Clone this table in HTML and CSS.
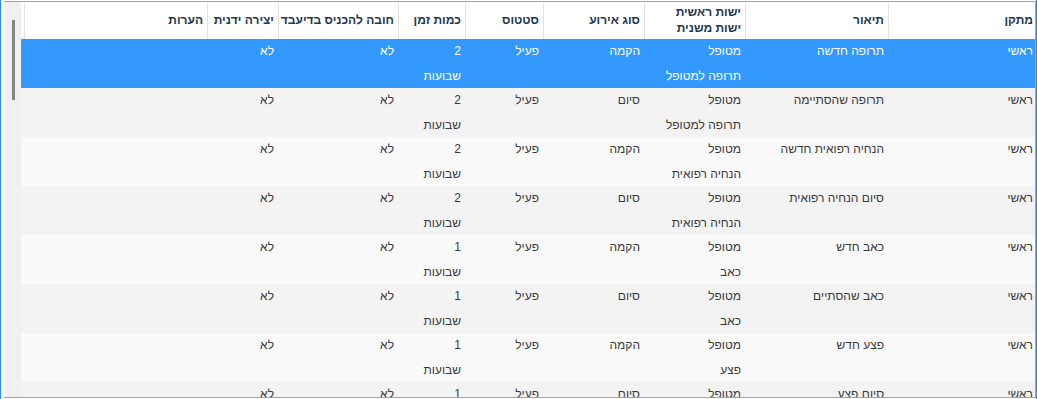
FILE: index.html
```html
<!DOCTYPE html>
<html lang="he">
<head>
<meta charset="utf-8">
<link rel="stylesheet" href="styles.css">
</head>
<body>
<div class="window">
  <div class="box">
    <div class="vscroll"><div class="thumb"></div></div>
    <div class="grid">
      <div class="row head">
        <div class="c c1">מתקן</div>
        <div class="c c2">תיאור</div>
        <div class="c c3 two"><span>ישות ראשית</span><span>ישות משנית</span></div>
        <div class="c c4">סוג אירוע</div>
        <div class="c c5">סטטוס</div>
        <div class="c c6">כמות זמן</div>
        <div class="c c7">חובה להכניס בדיעבד</div>
        <div class="c c8">יצירה ידנית</div>
        <div class="c c9">הערות</div>
        <div class="c c10"></div>
      </div>

      <div class="row sel">
        <div class="c c1">ראשי</div>
        <div class="c c2">תרופה חדשה</div>
        <div class="c c3"><span>מטופל</span><span>תרופה למטופל</span></div>
        <div class="c c4">הקמה</div>
        <div class="c c5">פעיל</div>
        <div class="c c6"><span>2</span><span>שבועות</span></div>
        <div class="c c7">לא</div>
        <div class="c c8">לא</div>
        <div class="c c9"></div>
        <div class="c c10"></div>
      </div>

      <div class="row odd">
        <div class="c c1">ראשי</div>
        <div class="c c2">תרופה שהסתיימה</div>
        <div class="c c3"><span>מטופל</span><span>תרופה למטופל</span></div>
        <div class="c c4">סיום</div>
        <div class="c c5">פעיל</div>
        <div class="c c6"><span>2</span><span>שבועות</span></div>
        <div class="c c7">לא</div>
        <div class="c c8">לא</div>
        <div class="c c9"></div>
        <div class="c c10"></div>
      </div>

      <div class="row even">
        <div class="c c1">ראשי</div>
        <div class="c c2">הנחיה רפואית חדשה</div>
        <div class="c c3"><span>מטופל</span><span>הנחיה רפואית</span></div>
        <div class="c c4">הקמה</div>
        <div class="c c5">פעיל</div>
        <div class="c c6"><span>2</span><span>שבועות</span></div>
        <div class="c c7">לא</div>
        <div class="c c8">לא</div>
        <div class="c c9"></div>
        <div class="c c10"></div>
      </div>

      <div class="row odd">
        <div class="c c1">ראשי</div>
        <div class="c c2">סיום הנחיה רפואית</div>
        <div class="c c3"><span>מטופל</span><span>הנחיה רפואית</span></div>
        <div class="c c4">סיום</div>
        <div class="c c5">פעיל</div>
        <div class="c c6"><span>2</span><span>שבועות</span></div>
        <div class="c c7">לא</div>
        <div class="c c8">לא</div>
        <div class="c c9"></div>
        <div class="c c10"></div>
      </div>

      <div class="row even">
        <div class="c c1">ראשי</div>
        <div class="c c2">כאב חדש</div>
        <div class="c c3"><span>מטופל</span><span>כאב</span></div>
        <div class="c c4">הקמה</div>
        <div class="c c5">פעיל</div>
        <div class="c c6"><span>1</span><span>שבועות</span></div>
        <div class="c c7">לא</div>
        <div class="c c8">לא</div>
        <div class="c c9"></div>
        <div class="c c10"></div>
      </div>

      <div class="row odd">
        <div class="c c1">ראשי</div>
        <div class="c c2">כאב שהסתיים</div>
        <div class="c c3"><span>מטופל</span><span>כאב</span></div>
        <div class="c c4">סיום</div>
        <div class="c c5">פעיל</div>
        <div class="c c6"><span>1</span><span>שבועות</span></div>
        <div class="c c7">לא</div>
        <div class="c c8">לא</div>
        <div class="c c9"></div>
        <div class="c c10"></div>
      </div>

      <div class="row even">
        <div class="c c1">ראשי</div>
        <div class="c c2">פצע חדש</div>
        <div class="c c3"><span>מטופל</span><span>פצע</span></div>
        <div class="c c4">הקמה</div>
        <div class="c c5">פעיל</div>
        <div class="c c6"><span>1</span><span>שבועות</span></div>
        <div class="c c7">לא</div>
        <div class="c c8">לא</div>
        <div class="c c9"></div>
        <div class="c c10"></div>
      </div>

      <div class="row odd">
        <div class="c c1">ראשי</div>
        <div class="c c2">סיום פצע</div>
        <div class="c c3"><span>מטופל</span><span>פצע</span></div>
        <div class="c c4">סיום</div>
        <div class="c c5">פעיל</div>
        <div class="c c6"><span>1</span><span>שבועות</span></div>
        <div class="c c7">לא</div>
        <div class="c c8">לא</div>
        <div class="c c9"></div>
        <div class="c c10"></div>
      </div>
    </div>
  </div>
</div>
</body>
</html>
```

FILE: styles.css
```css
html, body {
  margin: 0;
  padding: 0;
  background: #ffffff;
}

body {
  font-family: "Liberation Sans", Arial, sans-serif;
  font-size: 12px;
  color: #3a3a3a;
}

.window {
  width: 1037px;
  height: 399px;
  box-sizing: border-box;
  border-left: 1px solid #2a8ce6;
  border-right: 1px solid #2a8ce6;
  padding: 1px 0 1px 3px;
  background: #ffffff;
  overflow: hidden;
}

.box {
  height: 397px;
  box-sizing: border-box;
  border-top: 1px solid #a3a3a3;
  border-bottom: 1px solid #a3a3a3;
  border-right: 1px solid #a3a3a3;
  padding-left: 1px;
  display: flex;
  overflow: hidden;
}

.vscroll {
  width: 16px;
  flex: none;
  background: #f0f0f0;
  padding-top: 18px;
  display: flex;
  justify-content: center;
}

.thumb {
  width: 3px;
  height: 80px;
  margin-left: 1px;
  background: #868686;
}

.grid {
  flex: 1;
  direction: rtl;
  overflow: hidden;
  display: flex;
  flex-direction: column;
}

.row {
  display: flex;
  flex: none;
  height: 49px;
}

.row.head {
  height: 37px;
  background: #ffffff;
  font-weight: bold;
  color: #23384f;
}

.row.sel {
  background: #3399ff;
  color: #ffffff;
}

.row.odd {
  background: #f3f3f3;
}

.row.even {
  background: #f9f9f9;
}

.c {
  box-sizing: border-box;
  flex: none;
  padding-right: 4px;
  display: flex;
  flex-direction: column;
  line-height: 25px;
  white-space: nowrap;
  overflow: hidden;
}

.head .c {
  border-left: 1px solid #e2e2e2;
  margin-top: 1px;
  justify-content: center;
  line-height: 16px;
  padding-bottom: 2px;
}

.head .c10 {
  border-left: none;
}

.c1 { width: 147px; padding-right: 2px; }
.c2 { width: 143px; }
.c3 { width: 101px; }
.c4 { width: 101px; }
.c5 { width: 78px; }
.c6 { width: 67px; }
.c7 { width: 120px; }
.c8 { width: 71px; }
.c9 { width: 183px; }
.c10 { width: 3px; padding: 0; }
```
